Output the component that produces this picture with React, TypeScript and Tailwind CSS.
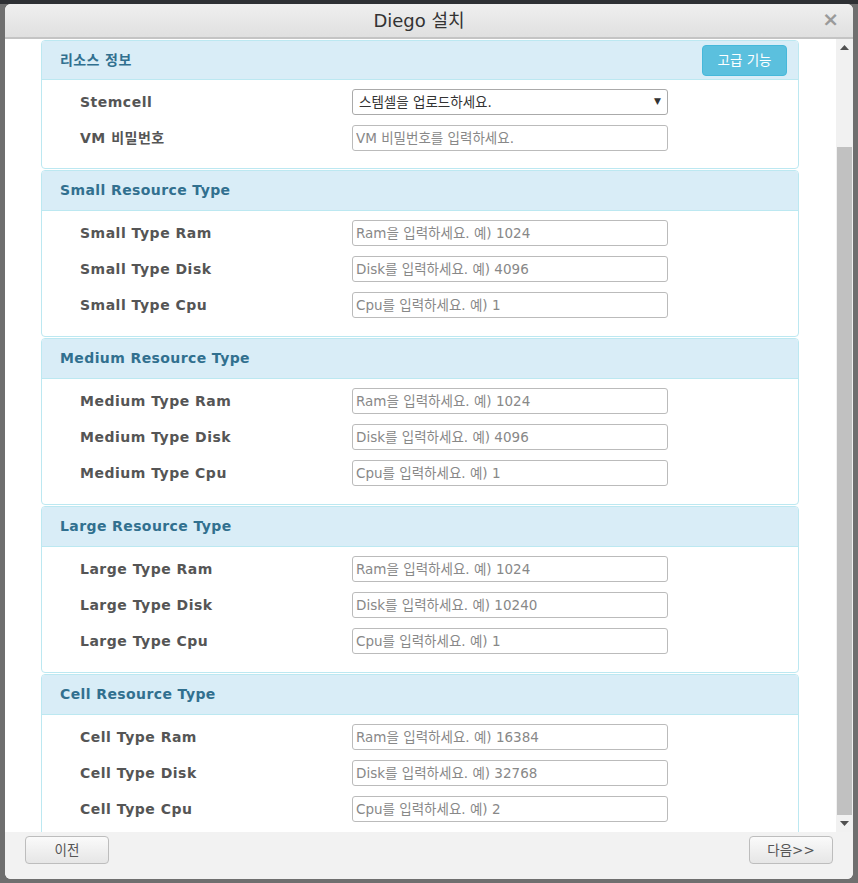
import React from "react";

type Row = { label: string; placeholder: string; select?: boolean };
type Section = { title: string; rows: Row[]; advanced?: boolean };

const sections: Section[] = [
  {
    title: "리소스 정보",
    advanced: true,
    rows: [
      { label: "Stemcell", placeholder: "스템셀을 업로드하세요.", select: true },
      { label: "VM 비밀번호", placeholder: "VM 비밀번호를 입력하세요." },
    ],
  },
  {
    title: "Small Resource Type",
    rows: [
      { label: "Small Type Ram", placeholder: "Ram을 입력하세요. 예) 1024" },
      { label: "Small Type Disk", placeholder: "Disk를 입력하세요. 예) 4096" },
      { label: "Small Type Cpu", placeholder: "Cpu를 입력하세요. 예) 1" },
    ],
  },
  {
    title: "Medium Resource Type",
    rows: [
      { label: "Medium Type Ram", placeholder: "Ram을 입력하세요. 예) 1024" },
      { label: "Medium Type Disk", placeholder: "Disk를 입력하세요. 예) 4096" },
      { label: "Medium Type Cpu", placeholder: "Cpu를 입력하세요. 예) 1" },
    ],
  },
  {
    title: "Large Resource Type",
    rows: [
      { label: "Large Type Ram", placeholder: "Ram을 입력하세요. 예) 1024" },
      { label: "Large Type Disk", placeholder: "Disk를 입력하세요. 예) 10240" },
      { label: "Large Type Cpu", placeholder: "Cpu를 입력하세요. 예) 1" },
    ],
  },
  {
    title: "Cell Resource Type",
    rows: [
      { label: "Cell Type Ram", placeholder: "Ram을 입력하세요. 예) 16384" },
      { label: "Cell Type Disk", placeholder: "Disk를 입력하세요. 예) 32768" },
      { label: "Cell Type Cpu", placeholder: "Cpu를 입력하세요. 예) 2" },
    ],
  },
];

const FONT = "font-['DejaVu_Sans','Noto_Sans_CJK_KR',sans-serif]";

const Panel: React.FC<{ section: Section; first?: boolean }> = ({ section, first }) => (
  <div className="border border-[#bce8f1] rounded-[4px] bg-white shrink-0">
    {/* panel heading */}
    <div
      className={`${first ? "h-[39px]" : "h-[40px]"} bg-[#d9edf7] border-b border-[#bce8f1] rounded-t-[3px] pl-[18px] pr-[11px] flex items-center justify-between`}
    >
      <span className="text-[14px] tracking-[0.4px] font-bold text-[#31708f]">{section.title}</span>
      {section.advanced && (
        <button className="h-[31px] w-[85px] rounded-[4px] bg-[#5bc0de] border border-[#46b8da] text-white text-[13.5px]">
          고급 기능
        </button>
      )}
    </div>
    <div className={`pt-[9px] ${first ? "pb-[17px]" : "pb-[18px]"} flex flex-col gap-[10px]`}>
      {section.rows.map((row) => (
        <div key={row.label} className="flex items-center h-[26px]">
          <div className="w-[310px] pl-[38px] text-[14px] tracking-[0.5px] font-bold text-[#555]">
            {row.label}
          </div>
          {row.select ? (
            <div className="w-[316px] h-[26px] border border-[#aaa] rounded-[3px] flex items-center justify-between pl-[6px] pr-[6px] text-[13.5px] text-[#333]">
              <span>{row.placeholder}</span>
              <span className="text-[9px] text-[#333]">▼</span>
            </div>
          ) : (
            <input
              className="w-[316px] h-[26px] border border-[#bbb] rounded-[3px] px-[3px] text-[13.5px] outline-none placeholder:text-[#888]"
              placeholder={row.placeholder}
            />
          )}
        </div>
      ))}
    </div>
  </div>
);

export default function App() {
  return (
    <div className={`w-[858px] h-[883px] bg-[#6f6f6f] flex flex-col overflow-hidden ${FONT}`}>
      <div className="h-[4px] bg-[#2e3034] shrink-0" />
      <div className="flex-1 min-h-0 flex pl-[5px] pr-[5px] pb-[4px]">
        {/* modal */}
        <div className="flex-1 min-h-0 flex flex-col rounded-[6px] overflow-hidden bg-white">
          {/* title */}
          <div className="h-[35px] shrink-0 bg-gradient-to-b from-[#efefef] to-[#e0e0e0] border-b-2 border-[#c4c4c4] flex items-center justify-center pr-[20px] relative">
            <span className="text-[18px] text-[#333]">Diego 설치</span>
            <span className="absolute right-[14px] top-[5px] text-[20px] font-bold text-[#9a9a9a] leading-none">
              ×
            </span>
          </div>
          {/* body */}
          <div className="flex-1 min-h-0 flex overflow-hidden">
            <div className="flex-1 min-h-0 overflow-hidden pl-[36px] pr-[37px] pt-[1px] flex flex-col gap-[1px]">
              {sections.map((s, i) => (
                <Panel key={s.title} section={s} first={i === 0} />
              ))}
            </div>
            {/* scrollbar */}
            <div className="w-[17px] bg-[#f1f1f1] flex flex-col items-center shrink-0">
              <div className="h-[17px] flex items-center justify-center shrink-0">
                <svg width="9" height="5" viewBox="0 0 9 5">
                  <path d="M0 5 L4.5 0 L9 5 Z" fill="#505050" />
                </svg>
              </div>
              <div className="h-[91px] shrink-0" />
              <div className="w-[15px] flex-1 bg-[#c1c1c1]" />
              <div className="h-[17px] flex items-center justify-center shrink-0">
                <svg width="9" height="5" viewBox="0 0 9 5">
                  <path d="M0 0 L4.5 5 L9 0 Z" fill="#505050" />
                </svg>
              </div>
            </div>
          </div>
          {/* footer */}
          <div className="h-[47px] shrink-0 bg-[#f2f2f2] flex justify-between items-start pt-[4px] pl-[20px] pr-[20px]">
            <button className="w-[84px] h-[28px] rounded-[4px] border border-[#bdbdbd] bg-gradient-to-b from-[#fafafa] to-[#e6e6e6] text-[13.5px] text-[#555]">
              이전
            </button>
            <button className="w-[84px] h-[28px] rounded-[4px] border border-[#bdbdbd] bg-gradient-to-b from-[#fafafa] to-[#e6e6e6] text-[13.5px] text-[#555]">
              다음&gt;&gt;
            </button>
          </div>
        </div>
      </div>
    </div>
  );
}
